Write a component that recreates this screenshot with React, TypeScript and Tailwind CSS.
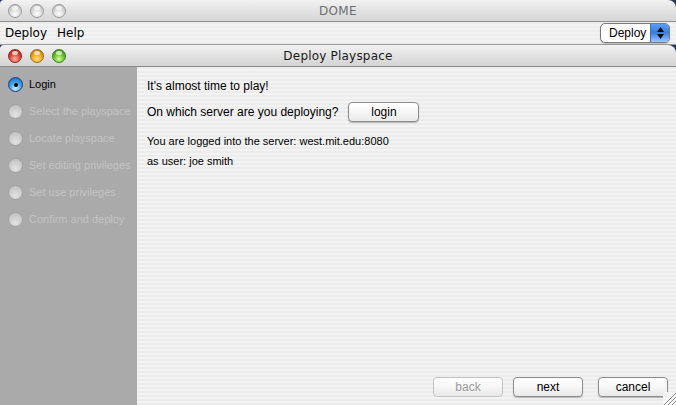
import React from 'react';

const stripes =
  'bg-[repeating-linear-gradient(180deg,#ececec_0px,#ececec_2px,#f3f3f3_2px,#f3f3f3_4px)]';

function Light({ kind }: { kind: 'gray' | 'red' | 'orange' | 'green' }) {
  const fills = {
    gray: 'bg-[radial-gradient(circle_at_50%_75%,#ffffff_0%,#dcdcdc_45%,#b4b4b4_100%)] border-[#9a9a9a]',
    red: 'bg-[radial-gradient(circle_at_50%_75%,#ffb3a8_0%,#e0412f_50%,#9c1a10_100%)] border-[#8a2a22]',
    orange: 'bg-[radial-gradient(circle_at_50%_75%,#ffe27a_0%,#f0a21a_50%,#b36a06_100%)] border-[#9a6a1a]',
    green: 'bg-[radial-gradient(circle_at_50%_75%,#d4ff9a_0%,#62c225_50%,#2f7d0c_100%)] border-[#3f7a22]',
  };
  return (
    <div className={`relative w-[14px] h-[14px] rounded-full border ${fills[kind]}`}>
      <div className="absolute left-[3px] top-[1px] w-[6px] h-[4px] rounded-full bg-white/70" />
    </div>
  );
}

function Radio({ on }: { on?: boolean }) {
  if (on) {
    return (
      <div className="relative w-[15px] h-[15px] rounded-full border border-[#1d3f7a] bg-[radial-gradient(circle_at_50%_80%,#c8f0ff_0%,#4aa3ee_45%,#1b5cb8_100%)] flex items-center justify-center">
        <div className="w-[4px] h-[4px] rounded-full bg-black" />
      </div>
    );
  }
  return (
    <div className="w-[15px] h-[15px] rounded-full border border-[#a2a2a2] bg-[radial-gradient(circle_at_50%_75%,#e2e2e2_0%,#cbcbcb_60%,#b8b8b8_100%)]" />
  );
}

function Button({ label, disabled, w }: { label: string; disabled?: boolean; w: string }) {
  return (
    <div
      className={`${w} h-[20px] rounded-[4px] border flex items-center justify-center text-[12px] bg-[linear-gradient(180deg,#ffffff_0%,#f6f6f6_50%,#e9e9e9_100%)] ${
        disabled ? 'border-[#c4c4c4] text-[#9a9a9a]' : 'border-[#8c8c8c] text-black shadow-[0_1px_1px_rgba(0,0,0,0.25)]'
      }`}
    >
      {label}
    </div>
  );
}

const steps = [
  'Select the playspace',
  'Locate playspace',
  'Set editing privileges',
  'Set use privileges',
  'Confirm and deploy',
];

export default function App() {
  return (
    <div className="w-[676px] h-[405px] overflow-hidden bg-[#24375e] flex flex-col font-['Liberation_Sans',Arial,sans-serif]">
      {/* DOME window */}
      <div className="rounded-tl-[4px] rounded-tr-[8px] overflow-hidden">
        <div className="h-[22px] relative flex items-center px-[8px] gap-[8px] bg-[linear-gradient(180deg,#f2f2f2_0%,#e2e2e2_50%,#d6d6d6_100%)] border-b border-[#8e8e8e]">
          <Light kind="gray" />
          <Light kind="gray" />
          <Light kind="gray" />
          <div className="absolute inset-0 flex items-center justify-center text-[12px] text-[#6e6e6e] font-['DejaVu_Sans',sans-serif] tracking-[0.4px]">
            DOME
          </div>
        </div>
        <div className={`h-[23px] flex items-center justify-between pl-[5px] pr-[6px] border-b border-[#9a9a9a] ${stripes}`}>
          <div className="flex gap-[10px] text-[12px] text-black font-['DejaVu_Sans',sans-serif]">
            <span>Deploy</span>
            <span>Help</span>
          </div>
          <div className="w-[70px] h-[20px] rounded-[5px] border border-[#7a7a7a] bg-white flex overflow-hidden shadow-[0_1px_1px_rgba(0,0,0,0.2)]">
            <div className="flex-1 flex items-center pl-[8px] text-[12px] text-black">Deploy</div>
            <div className="w-[19px] flex flex-col items-center justify-center gap-[2px] bg-[linear-gradient(180deg,#5a9cf0_0%,#3a7de0_50%,#9ccaff_100%)] border-l border-[#3d6db5]">
              <svg width="7" height="5" viewBox="0 0 7 5"><path d="M3.5 0L7 5H0z" fill="#0a0a0a" /></svg>
              <svg width="7" height="5" viewBox="0 0 7 5"><path d="M0 0h7L3.5 5z" fill="#0a0a0a" /></svg>
            </div>
          </div>
        </div>
      </div>

      {/* Deploy Playspace window */}
      <div className="flex-1 flex flex-col rounded-tl-[4px] rounded-tr-[8px] overflow-hidden">
        <div className="h-[22px] relative flex items-center px-[8px] gap-[8px] bg-[linear-gradient(180deg,#f2f2f2_0%,#e2e2e2_50%,#d4d4d4_100%)] border-b border-[#8a8a8a]">
          <Light kind="red" />
          <Light kind="orange" />
          <Light kind="green" />
          <div className="absolute inset-0 flex items-center justify-center text-[12px] text-[#1a1a1a] font-['DejaVu_Sans',sans-serif] tracking-[0.2px]">
            Deploy Playspace
          </div>
        </div>

        <div className="flex-1 flex">
          {/* steps */}
          <div className="w-[137px] bg-[#aaaaaa] pt-[10px] pl-[8px] flex flex-col gap-[12px]">
            <div className="flex items-center gap-[6px] text-[11px] leading-[15px] text-black">
              <Radio on />
              <span>Login</span>
            </div>
            {steps.map((s) => (
              <div key={s} className="flex items-center gap-[6px] text-[11px] leading-[15px] text-[#c4c4c4]">
                <Radio />
                <span>{s}</span>
              </div>
            ))}
          </div>

          {/* content */}
          <div className={`flex-1 flex flex-col pl-[10px] pr-[8px] ${stripes}`}>
            <div className="pt-[10px] text-[12px] text-black">It's almost time to play!</div>
            <div className="mt-[7px] flex items-center gap-[10px] text-[12px] text-black">
              <span>On which server are you deploying?</span>
              <Button label="login" w="w-[71px]" />
            </div>
            <div className="mt-[9px] text-[11px] text-black leading-[20px]">
              <div>You are logged into the server: west.mit.edu:8080</div>
              <div>as user: joe smith</div>
            </div>
            <div className="flex-1" />
            <div className="flex justify-end pb-[8px] relative">
              <div className="flex gap-[10px] mr-[15px]">
                <Button label="back" disabled w="w-[70px]" />
                <Button label="next" w="w-[70px]" />
              </div>
              <Button label="cancel" w="w-[70px]" />
              <svg className="absolute right-[-8px] bottom-0" width="13" height="13" viewBox="0 0 13 13">
                <rect x="0" y="0" width="13" height="13" fill="#f4f4f4" />
                <path d="M1 13L13 1M5 13L13 5M9 13L13 9" stroke="#8a8a8a" strokeWidth="1" />
                <path d="M2 13L13 2M6 13L13 6M10 13L13 10" stroke="#ffffff" strokeWidth="1" />
              </svg>
            </div>
          </div>
        </div>
      </div>
    </div>
  );
}
